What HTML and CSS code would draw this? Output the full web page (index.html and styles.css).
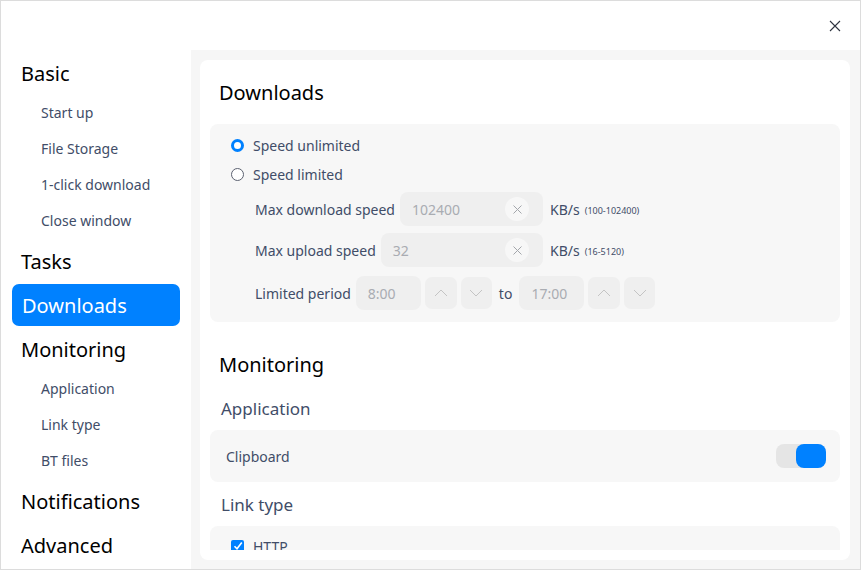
FILE: index.html
```html
<!DOCTYPE html>
<html>
<head>
<meta charset="utf-8">
<link rel="stylesheet" href="styles.css">
</head>
<body>
<div class="window">
  <div class="titlebar">
    <button class="close" aria-label="Close">
      <svg width="12" height="12" viewBox="0 0 12 12"><path d="M1 1L11 11M11 1L1 11" stroke="#2e3440" stroke-width="1.1" fill="none"/></svg>
    </button>
  </div>
  <div class="content">
    <nav class="sidebar">
      <div class="nav-top">Basic</div>
      <div class="nav-sub">Start up</div>
      <div class="nav-sub">File Storage</div>
      <div class="nav-sub">1-click download</div>
      <div class="nav-sub">Close window</div>
      <div class="nav-top">Tasks</div>
      <div class="nav-top active"><span>Downloads</span></div>
      <div class="nav-top">Monitoring</div>
      <div class="nav-sub">Application</div>
      <div class="nav-sub">Link type</div>
      <div class="nav-sub">BT files</div>
      <div class="nav-top">Notifications</div>
      <div class="nav-top">Advanced</div>
    </nav>
    <main class="main">
      <div class="card">
        <div class="scroll">
          <h2 class="section-title">Downloads</h2>
          <div class="group">
            <label class="radio-row"><span class="radio checked"></span>Speed unlimited</label>
            <label class="radio-row second"><span class="radio"></span>Speed limited</label>
            <div class="field-row">
              <div class="field">
                <span class="field-label">Max download speed</span>
                <div class="input"><span class="value">102400</span><span class="clear"><svg width="9" height="9" viewBox="0 0 9 9"><path d="M0.5 0.5L8.5 8.5M8.5 0.5L0.5 8.5" stroke="#a3a6ab" stroke-width="1" fill="none"/></svg></span></div>
              </div>
              <span class="unit">KB/s</span><span class="range">(100-102400)</span>
            </div>
            <div class="field-row">
              <div class="field">
                <span class="field-label">Max upload speed</span>
                <div class="input"><span class="value">32</span><span class="clear"><svg width="9" height="9" viewBox="0 0 9 9"><path d="M0.5 0.5L8.5 8.5M8.5 0.5L0.5 8.5" stroke="#a3a6ab" stroke-width="1" fill="none"/></svg></span></div>
              </div>
              <span class="unit">KB/s</span><span class="range">(16-5120)</span>
            </div>
            <div class="field-row period">
              <span class="field-label">Limited period</span>
              <div class="time">8:00</div>
              <div class="step"><svg width="14" height="8" viewBox="0 0 14 8"><path d="M1 7L7 1L13 7" stroke="#c4c4c4" fill="none"/></svg></div>
              <div class="step"><svg width="14" height="8" viewBox="0 0 14 8"><path d="M1 1L7 7L13 1" stroke="#c4c4c4" fill="none"/></svg></div>
              <span class="to">to</span>
              <div class="time">17:00</div>
              <div class="step"><svg width="14" height="8" viewBox="0 0 14 8"><path d="M1 7L7 1L13 7" stroke="#c4c4c4" fill="none"/></svg></div>
              <div class="step"><svg width="14" height="8" viewBox="0 0 14 8"><path d="M1 1L7 7L13 1" stroke="#c4c4c4" fill="none"/></svg></div>
            </div>
          </div>
          <h2 class="section-title mon">Monitoring</h2>
          <h3 class="sub-title">Application</h3>
          <div class="row-box">
            <span class="row-label">Clipboard</span>
            <span class="toggle"><span class="knob"></span></span>
          </div>
          <h3 class="sub-title link">Link type</h3>
          <div class="group check-group">
            <label class="check-row"><span class="checkbox"><svg width="10" height="10" viewBox="0 0 10 10"><path d="M1.5 5.2L4 7.8L8.8 1.5" stroke="#fff" stroke-width="1.6" fill="none"/></svg></span>HTTP</label>
          </div>
        </div>
      </div>
    </main>
  </div>
</div>
</body>
</html>
```

FILE: styles.css
```css
* { box-sizing: border-box; }
html, body { margin: 0; padding: 0; }
body {
  width: 861px;
  height: 570px;
  font-family: "Noto Sans", "Open Sans", sans-serif;
  background: #fff;
  overflow: hidden;
}
.window {
  width: 861px;
  height: 570px;
  border: 1px solid #dcdcdc;
  display: flex;
  flex-direction: column;
  background: #fff;
}
.titlebar {
  height: 49px;
  display: flex;
  justify-content: flex-end;
  align-items: center;
  padding-right: 15px;
}
.close {
  border: 0;
  background: none;
  width: 20px;
  height: 20px;
  padding: 0;
  display: flex;
  align-items: center;
  justify-content: center;
}
.content {
  flex: 1;
  display: flex;
  min-height: 0;
}
.sidebar {
  width: 190px;
  padding: 1px 10px 0 11px;
  display: flex;
  flex-direction: column;
}
.nav-top {
  height: 44px;
  font-size: 20px;
  color: #000;
  display: flex;
  align-items: center;
  padding-left: 9px;
  flex-shrink: 0;
}
.nav-top.active {
  padding: 0;
  align-items: flex-start;
}
.nav-top.active span {
  display: flex;
  align-items: center;
  width: 168px;
  height: 42px;
  margin-top: 1px;
  background: #0081ff;
  color: #fff;
  border-radius: 7px;
  padding: 1px 0 0 10px;
}
.nav-sub {
  height: 36px;
  font-size: 14px;
  color: #414d68;
  display: flex;
  align-items: center;
  padding: 0 0 2px 29px;
  flex-shrink: 0;
}
.main {
  flex: 1;
  background: #f6f6f6;
  padding: 10px 10px 9px 9px;
  display: flex;
}
.card {
  flex: 1;
  background: #fff;
  border-radius: 8px;
  padding: 0 10px 10px;
  display: flex;
}
.scroll {
  flex: 1;
  overflow: hidden;
}
.section-title {
  margin: 0;
  font-size: 20px;
  font-weight: 400;
  color: #000;
  height: 64px;
  line-height: 28px;
  padding: 19px 0 0 9px;
}
.group {
  background: #f7f7f7;
  border-radius: 8px;
  padding: 9px 0 12px 21px;
  display: flex;
  flex-direction: column;
}
.radio-row {
  display: flex;
  align-items: center;
  height: 24px;
  font-size: 14px;
  color: #414d68;
}
.radio-row.second { margin-top: 5px; margin-bottom: 6px; }
.radio {
  width: 13px;
  height: 13px;
  border-radius: 50%;
  border: 1px solid #5b6170;
  margin-right: 9px;
  background: #fff;
}
.radio.checked {
  border: 3.5px solid #0081ff;
}
.field-row {
  display: flex;
  align-items: center;
  height: 34px;
  margin-left: 24px;
  margin-bottom: 7px;
}
.field-row.period { margin-bottom: 0; margin-top: 2px; }
.field {
  width: 288px;
  display: flex;
  align-items: center;
}
.field-label {
  font-size: 14px;
  color: #414d68;
  margin-right: 5px;
  white-space: nowrap;
}
.input {
  flex: 1;
  height: 34px;
  background: #efefef;
  border-radius: 8px;
  display: flex;
  align-items: center;
  justify-content: space-between;
  padding: 0 14px 0 12px;
}
.value {
  font-size: 14px;
  color: #a9acb2;
}
.clear {
  width: 24px;
  height: 24px;
  border-radius: 50%;
  background: #f7f7f7;
  display: flex;
  align-items: center;
  justify-content: center;
}
.unit {
  font-size: 14px;
  color: #414d68;
  margin-left: 7px;
}
.range {
  font-size: 9px;
  color: #414d68;
  margin-left: 5px;
  margin-top: 2px;
}
.time {
  width: 65px;
  height: 34px;
  background: #efefef;
  border-radius: 8px;
  font-size: 14px;
  color: #a9acb2;
  display: flex;
  align-items: center;
  padding-left: 12px;
}
.step {
  width: 32px;
  height: 32px;
  background: #efefef;
  border-radius: 7px;
  margin-left: 4px;
  display: flex;
  align-items: center;
  justify-content: center;
}
.step + .step { width: 31px; }
.to {
  font-size: 14px;
  color: #414d68;
  margin: 0 7px 0 7px;
}
.section-title.mon {
  height: 75px;
  padding-top: 29px;
}
.sub-title {
  margin: 0;
  font-size: 17px;
  font-weight: 400;
  color: #414d68;
  height: 33px;
  line-height: 24px;
  padding: 0 0 0 11px;
}
.row-box {
  background: #f7f7f7;
  border-radius: 8px;
  height: 52px;
  display: flex;
  align-items: center;
  justify-content: space-between;
  padding: 0 14px 0 16px;
}
.row-label {
  font-size: 14px;
  color: #414d68;
}
.toggle {
  width: 50px;
  height: 24px;
  border-radius: 8px;
  background: #e5e5e5;
  display: flex;
  justify-content: flex-end;
}
.knob {
  width: 30px;
  height: 24px;
  border-radius: 8px;
  background: #0081ff;
}
.sub-title.link {
  height: 44px;
  padding-top: 11px;
}
.check-group {
  padding: 12px 0 0 21px;
  height: 60px;
}
.check-row {
  display: flex;
  align-items: center;
  font-size: 14px;
  color: #414d68;
  height: 16px;
}
.checkbox {
  width: 13px;
  height: 13px;
  background: #0081ff;
  border-radius: 2px;
  margin-right: 9px;
  display: flex;
  align-items: center;
  justify-content: center;
}
```
